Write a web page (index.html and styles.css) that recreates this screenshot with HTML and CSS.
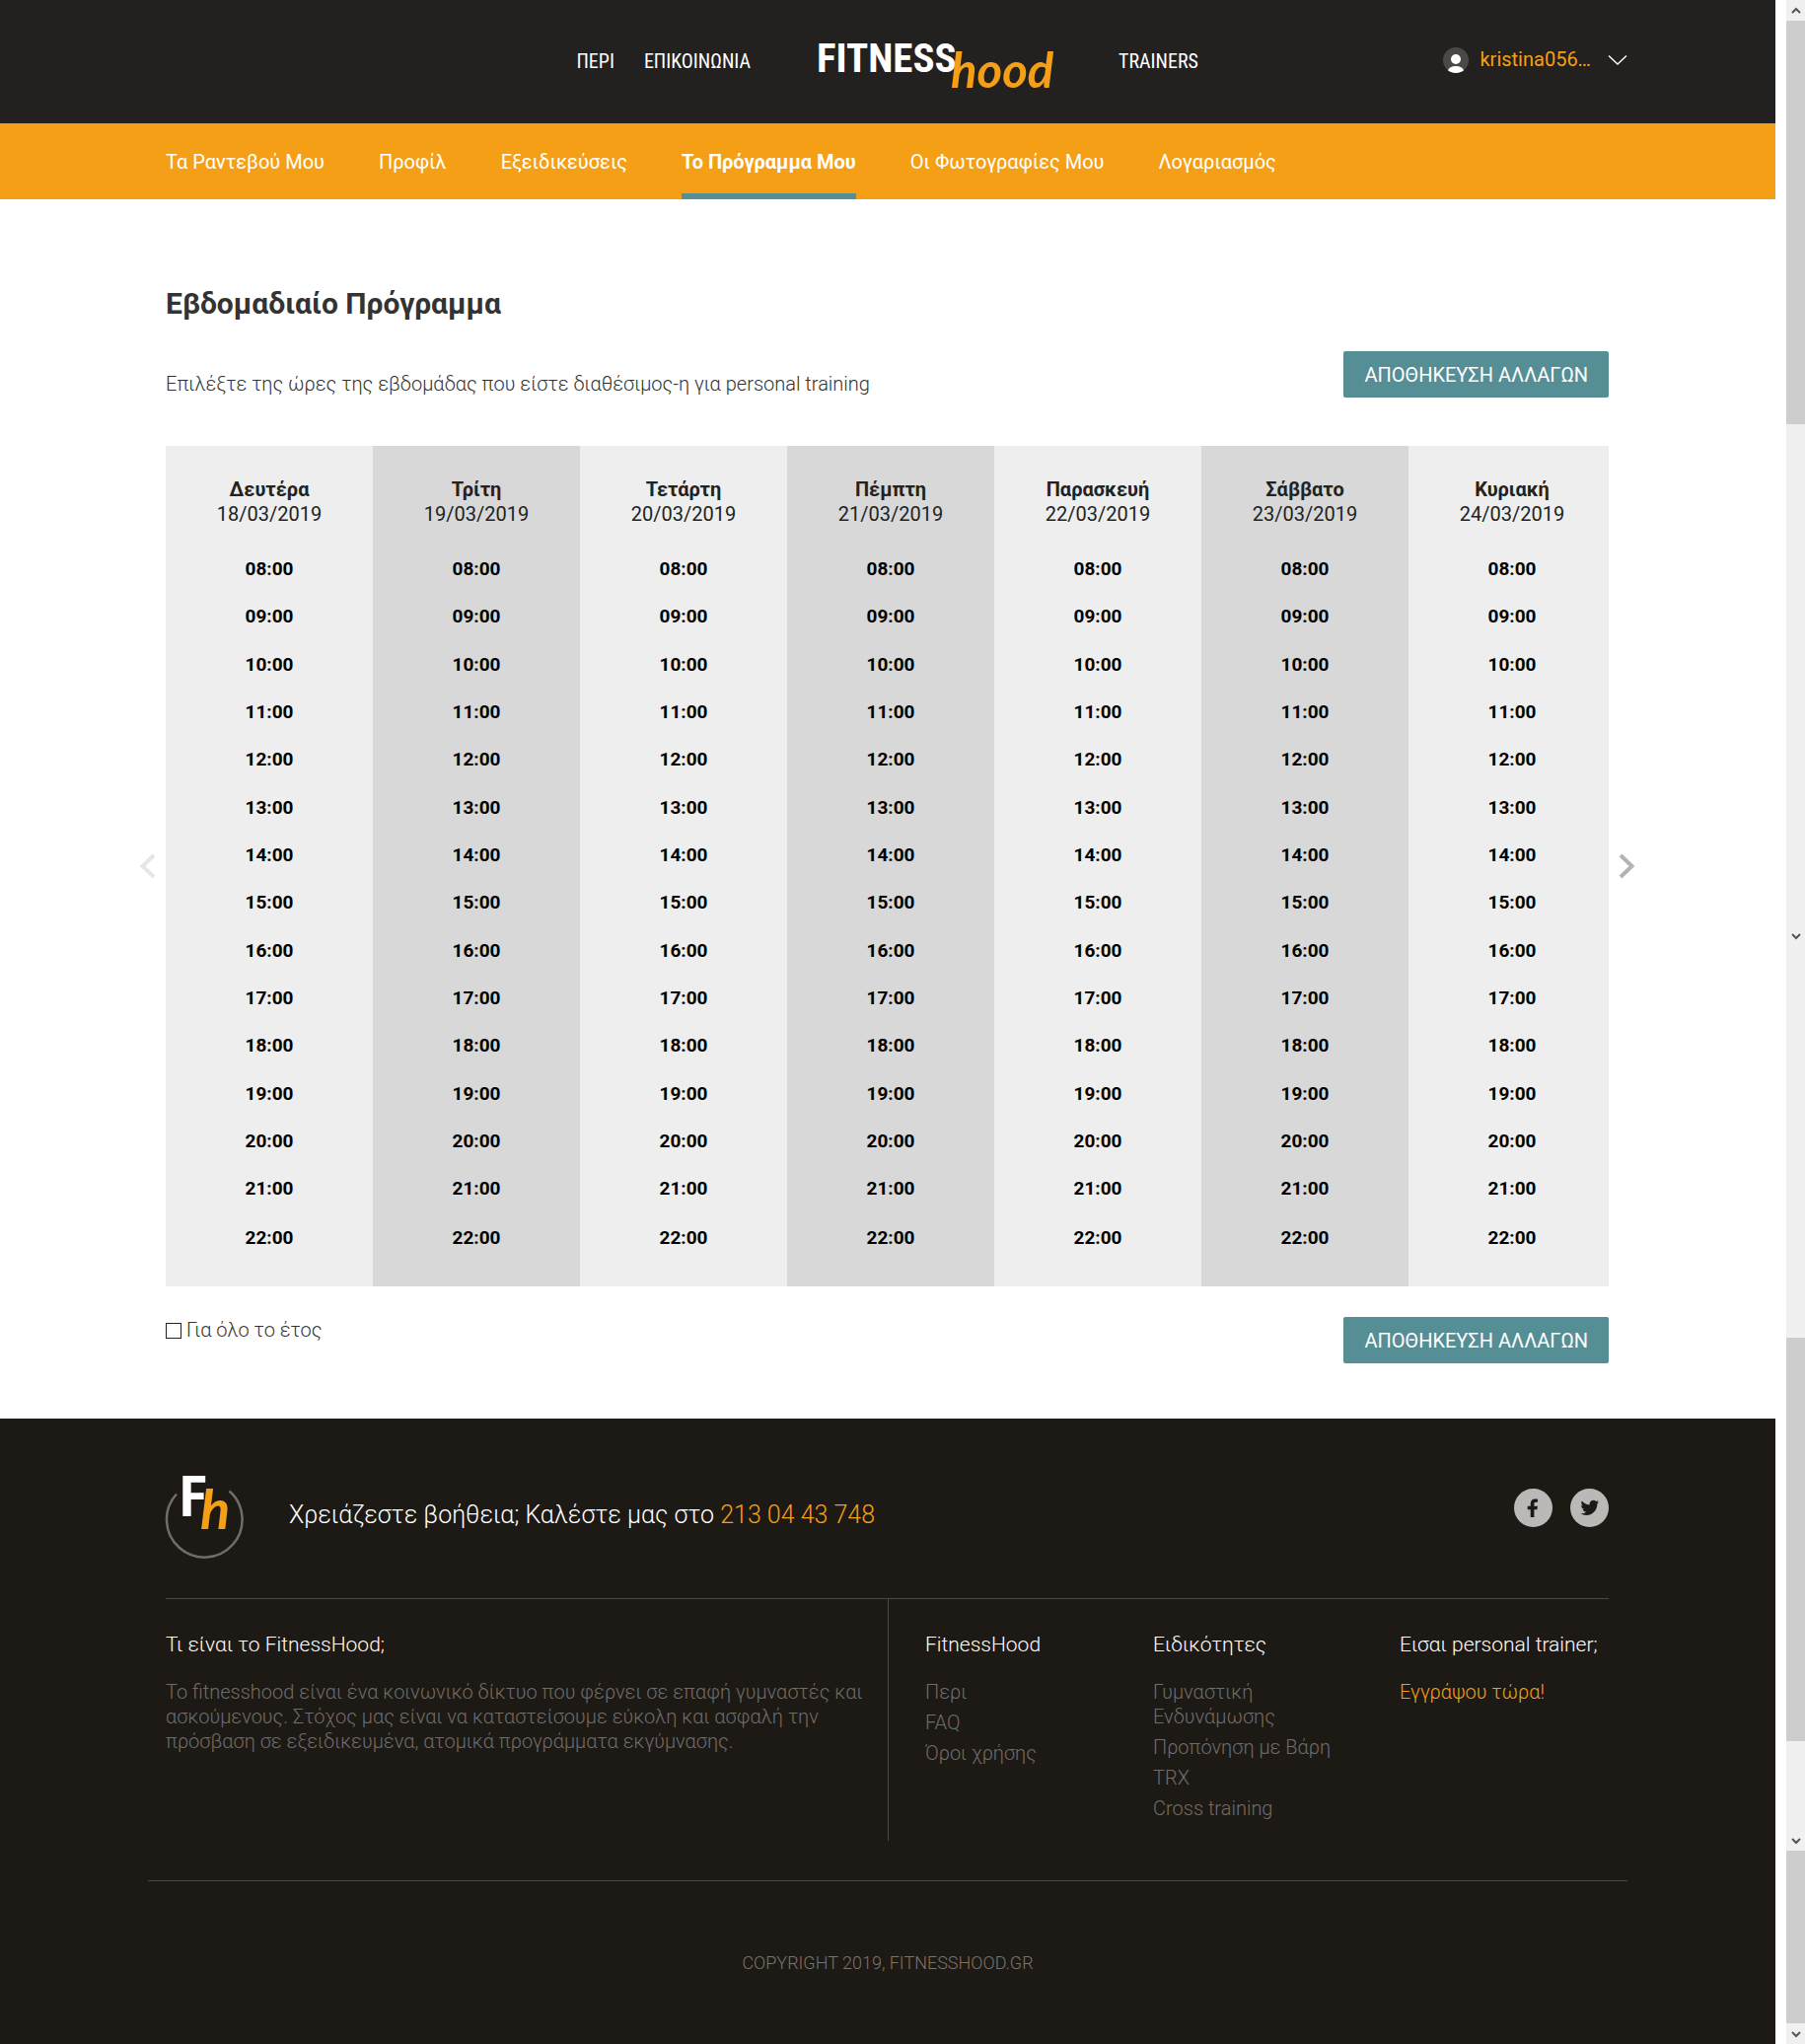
FILE: index.html
```html
<!DOCTYPE html>
<html lang="el">
<head>
<meta charset="utf-8">
<title>FitnessHood – Το Πρόγραμμα Μου</title>
<link rel="stylesheet" href="styles.css">
</head>
<body>
<div class="page">
  <header class="site-header">
    <div class="header-row">
      <nav class="main-nav main-nav-left" aria-label="Κύριο μενού">
        <a href="#about">ΠΕΡΙ</a>
        <a href="#contact">ΕΠΙΚΟΙΝΩΝΙΑ</a>
      </nav>
      <a class="logo" href="#home" aria-label="FitnessHood">
        <svg width="239" height="66" viewBox="0 0 239 66">
          <text class="logo-fitness" x="0" y="43">FITNESS</text>
          <text class="logo-hood" x="136" y="59">hood</text>
        </svg>
      </a>
      <nav class="main-nav main-nav-right" aria-label="Trainers">
        <a href="#trainers">TRAINERS</a>
      </nav>
      <button class="user-menu" type="button">
        <svg width="26" height="26" viewBox="0 0 26 26"><defs><clipPath id="disc"><circle cx="13" cy="13" r="13"/></clipPath></defs><circle cx="13" cy="13" r="13" fill="#4a4947"/><g clip-path="url(#disc)" fill="#fff"><circle cx="13" cy="12" r="5"/><ellipse cx="13" cy="24" rx="8" ry="5"/></g></svg>
        <span>kristina056…</span>
        <svg width="20" height="12" viewBox="0 0 20 12"><path d="M1 1.5 10 10 19 1.5" fill="none" stroke="#fff" stroke-width="1.4"/></svg>
      </button>
    </div>
  </header>

  <nav class="sub-nav" aria-label="Λογαριασμός">
    <div class="sub-nav-row">
      <a href="#appointments">Τα Ραντεβού Μου</a>
      <a href="#profile">Προφίλ</a>
      <a href="#skills">Εξειδικεύσεις</a>
      <a class="active" href="#schedule" aria-current="page">Το Πρόγραμμα Μου</a>
      <a href="#photos">Οι Φωτογραφίες Μου</a>
      <a href="#account">Λογαριασμός</a>
    </div>
  </nav>

  <main class="content">
    <h1>Εβδομαδιαίο Πρόγραμμα</h1>
    <div class="intro">
      <p>Επιλέξτε της ώρες της εβδομάδας που είστε διαθέσιμος-η για personal training</p>
      <button class="save" type="button">ΑΠΟΘΗΚΕΥΣΗ ΑΛΛΑΓΩΝ</button>
    </div>
    <div class="schedule">
      <button class="arrow arrow-prev" type="button" aria-label="Προηγούμενη εβδομάδα" disabled><svg width="17" height="26" viewBox="0 0 17 26"><path d="M15 2 3.500 13 15 24" fill="none" stroke="currentColor" stroke-width="4"/></svg></button>
      <div class="table-clip">
        <table>
          <colgroup><col><col class="alt"><col><col class="alt"><col><col class="alt"><col></colgroup>
          <thead><tr>
            <th scope="col">Δευτέρα <span>18/03/2019</span></th>
            <th scope="col">Τρίτη <span>19/03/2019</span></th>
            <th scope="col">Τετάρτη <span>20/03/2019</span></th>
            <th scope="col">Πέμπτη <span>21/03/2019</span></th>
            <th scope="col">Παρασκευή <span>22/03/2019</span></th>
            <th scope="col">Σάββατο <span>23/03/2019</span></th>
            <th scope="col">Κυριακή <span>24/03/2019</span></th>
          </tr></thead>
          <tbody>
            <tr><td>08:00</td><td>08:00</td><td>08:00</td><td>08:00</td><td>08:00</td><td>08:00</td><td>08:00</td></tr>
            <tr><td>09:00</td><td>09:00</td><td>09:00</td><td>09:00</td><td>09:00</td><td>09:00</td><td>09:00</td></tr>
            <tr><td>10:00</td><td>10:00</td><td>10:00</td><td>10:00</td><td>10:00</td><td>10:00</td><td>10:00</td></tr>
            <tr><td>11:00</td><td>11:00</td><td>11:00</td><td>11:00</td><td>11:00</td><td>11:00</td><td>11:00</td></tr>
            <tr><td>12:00</td><td>12:00</td><td>12:00</td><td>12:00</td><td>12:00</td><td>12:00</td><td>12:00</td></tr>
            <tr><td>13:00</td><td>13:00</td><td>13:00</td><td>13:00</td><td>13:00</td><td>13:00</td><td>13:00</td></tr>
            <tr><td>14:00</td><td>14:00</td><td>14:00</td><td>14:00</td><td>14:00</td><td>14:00</td><td>14:00</td></tr>
            <tr><td>15:00</td><td>15:00</td><td>15:00</td><td>15:00</td><td>15:00</td><td>15:00</td><td>15:00</td></tr>
            <tr><td>16:00</td><td>16:00</td><td>16:00</td><td>16:00</td><td>16:00</td><td>16:00</td><td>16:00</td></tr>
            <tr><td>17:00</td><td>17:00</td><td>17:00</td><td>17:00</td><td>17:00</td><td>17:00</td><td>17:00</td></tr>
            <tr><td>18:00</td><td>18:00</td><td>18:00</td><td>18:00</td><td>18:00</td><td>18:00</td><td>18:00</td></tr>
            <tr><td>19:00</td><td>19:00</td><td>19:00</td><td>19:00</td><td>19:00</td><td>19:00</td><td>19:00</td></tr>
            <tr><td>20:00</td><td>20:00</td><td>20:00</td><td>20:00</td><td>20:00</td><td>20:00</td><td>20:00</td></tr>
            <tr><td>21:00</td><td>21:00</td><td>21:00</td><td>21:00</td><td>21:00</td><td>21:00</td><td>21:00</td></tr>
            <tr><td>22:00</td><td>22:00</td><td>22:00</td><td>22:00</td><td>22:00</td><td>22:00</td><td>22:00</td></tr>
          </tbody>
        </table>
      </div>
      <button class="arrow arrow-next" type="button" aria-label="Επόμενη εβδομάδα"><svg width="17" height="26" viewBox="0 0 17 26"><path d="M2 2 13.500 13 2 24" fill="none" stroke="currentColor" stroke-width="4"/></svg></button>
    </div>
    <div class="after">
      <label class="year"><input type="checkbox"> Για όλο το έτος</label>
      <button class="save" type="button">ΑΠΟΘΗΚΕΥΣΗ ΑΛΛΑΓΩΝ</button>
    </div>
  </main>

  <footer class="site-footer">
    <div class="footer-inner">
      <div class="help">
        <svg width="80" height="87" viewBox="0 0 80 87">
          <path d="M11 20.500A38.300 38.300 0 1 0 64.500 17.500" fill="none" stroke="#6f6e6c" stroke-width="2.500"/>
          <text class="mark-f" x="14" y="43">F</text>
          <text class="mark-h" x="35" y="56">h</text>
        </svg>
        <p>Χρειάζεστε βοήθεια; Καλέστε μας στο <a href="tel:2130443748">213 04 43 748</a></p>
        <div class="social">
          <a href="#facebook" aria-label="Facebook"><svg width="39" height="39" viewBox="0 0 39 39"><circle cx="19.500" cy="19.500" r="19.500" fill="#bbb9b7"/><path d="M24 10.500v3.300h-1.900c-1.400 0-1.700.7-1.700 1.700v2.200h3.500l-.5 3.500h-3V29h-3.700v-7.800h-3v-3.500h3v-2.600c0-3 1.900-4.700 4.600-4.700 1.200 0 2.400.1 2.700.1z" fill="#1d1915"/></svg></a>
          <a href="#twitter" aria-label="Twitter"><svg width="39" height="39" viewBox="0 0 39 39"><circle cx="19.500" cy="19.500" r="19.500" fill="#bbb9b7"/><path transform="translate(10.500 10) scale(.78)" d="M23.950 4.570a10 10 0 0 1-2.820.77 4.960 4.960 0 0 0 2.160-2.720c-.95.550-2 .950-3.120 1.180a4.920 4.920 0 0 0-8.390 4.480C7.690 8.090 4.070 6.130 1.640 3.160a4.900 4.900 0 0 0-.67 2.480c0 1.710.87 3.210 2.190 4.090a4.900 4.900 0 0 1-2.230-.61v.06a4.920 4.920 0 0 0 3.950 4.830 5 5 0 0 1-2.210.08 4.940 4.940 0 0 0 4.600 3.420A9.870 9.870 0 0 1 0 19.540a13.990 13.990 0 0 0 7.550 2.210c9.050 0 14-7.500 14-13.980 0-.21 0-.42-.02-.63a9.940 9.940 0 0 0 2.460-2.550z" fill="#1d1915"/></svg></a>
        </div>
      </div>
      <div class="columns">
        <section class="about">
          <h2>Τι είναι το FitnessHood;</h2>
          <p>Το fitnesshood είναι ένα κοινωνικό δίκτυο που φέρνει σε επαφή γυμναστές και ασκούμενους. Στόχος μας είναι να καταστείσουμε εύκολη και ασφαλή την πρόσβαση σε εξειδικευμένα, ατομικά προγράμματα εκγύμνασης.</p>
        </section>
        <section class="links">
          <h2>FitnessHood</h2>
          <ul>
            <li><a href="#about">Περι</a></li>
            <li><a href="#faq">FAQ</a></li>
            <li><a href="#terms">Όροι χρήσης</a></li>
          </ul>
        </section>
        <section class="specialties">
          <h2>Ειδικότητες</h2>
          <ul>
            <li><a href="#strength">Γυμναστική Ενδυνάμωσης</a></li>
            <li><a href="#weights">Προπόνηση με Βάρη</a></li>
            <li><a href="#trx">TRX</a></li>
            <li><a href="#cross">Cross training</a></li>
          </ul>
        </section>
        <section class="join">
          <h2>Εισαι personal trainer;</h2>
          <a href="#signup">Εγγράψου τώρα!</a>
        </section>
      </div>
    </div>
    <p class="copyright">COPYRIGHT 2019, FITNESSHOOD.GR</p>
  </footer>
</div>

<div class="scrollbar" aria-hidden="true">
  <span class="step"><svg width="10" height="8" viewBox="0 0 10 8"><path d="M1 6 5 2 9 6" fill="none" stroke="#555" stroke-width="2"/></svg></span>
  <span class="thumb long"></span>
  <span class="track upper"></span>
  <span class="step"><svg width="10" height="8" viewBox="0 0 10 8"><path d="M1 2 5 6 9 2" fill="none" stroke="#555" stroke-width="2"/></svg></span>
  <span class="track middle"></span>
  <span class="thumb long"></span>
  <span class="track lower"></span>
  <span class="step"><svg width="10" height="8" viewBox="0 0 10 8"><path d="M1 2 5 6 9 2" fill="none" stroke="#555" stroke-width="2"/></svg></span>
  <span class="thumb short"></span>
  <span class="step"><svg width="10" height="8" viewBox="0 0 10 8"><path d="M1 2 5 6 9 2" fill="none" stroke="#555" stroke-width="2"/></svg></span>
</div>
</body>
</html>
```

FILE: styles.css
```css
* { box-sizing: border-box; }

body {
  margin: 0;
  display: flex;
  gap: 11px;
  background: #fff;
  color: #333;
  font: 400 20px/25px Roboto, sans-serif;
}

a { color: inherit; text-decoration: none; }
h1, h2, p, ul { margin: 0; padding: 0; }
ul { list-style: none; }
svg { display: block; overflow: visible; }

button {
  border: 0;
  padding: 0;
  background: none;
  color: inherit;
  font: inherit;
  cursor: pointer;
}

.page { flex: 1; min-width: 0; }

/* Header */
.site-header { background: #22211f; color: #fff; }

.header-row {
  max-width: 1500px;
  margin: 0 auto;
  height: 125px;
  display: grid;
  grid-template-columns: 611px 239px 1fr auto;
  column-gap: 67px;
  align-items: center;
}

.main-nav {
  display: flex;
  gap: 30px;
  font-family: "Roboto Condensed", Roboto, sans-serif;
}

.main-nav-left { justify-content: flex-end; }
.logo-fitness { font: 700 41px "Roboto Condensed", "Liberation Sans Narrow", sans-serif; fill: #fff; }
.logo-hood { font: italic 700 49px Lato, sans-serif; fill: #f59f17; }

.user-menu {
  display: flex;
  align-items: center;
  gap: 11px;
  padding-bottom: 4px;
  color: #f59f17;
}

.user-menu span { margin-right: 6px; }

/* Account menu */
.sub-nav { background: #f59f17; color: #fff; }

.sub-nav-row {
  max-width: 1500px;
  margin: 0 auto;
  padding: 0 18px;
  display: flex;
  gap: 55px;
}

.sub-nav a { padding: 27px 0 19px; border-bottom: 6px solid transparent; }
.sub-nav .active { border-color: #558e95; font-weight: 700; }

/* Weekly schedule */
.content {
  max-width: 1500px;
  margin: 0 auto;
  padding: 87px 19px 56px 18px;
}

h1 { font-size: 30px; line-height: 38px; font-weight: 700; }

.intro {
  display: flex;
  justify-content: space-between;
  align-items: flex-end;
  margin: 29px 0 49px;
}

.intro p { font-weight: 300; padding-bottom: 1px; }

.save {
  padding: 12px 21px 10px;
  border-radius: 2px;
  background: #558e95;
  color: #fff;
}

.schedule { position: relative; }
.table-clip { overflow: hidden; }

table {
  width: calc(100% + 7px);
  table-layout: fixed;
  border-collapse: collapse;
  text-align: center;
}

col { background: #eee; }
col.alt { background: #d8d8d8; }
th { height: 100px; padding: 32px 0 18px; color: #222; font-weight: 700; }
th span { display: block; font-weight: 400; }
td { height: 48px; padding: 0; color: #000; font-size: 19px; font-weight: 700; }
tr:nth-child(3n + 2) td { height: 49px; }
tr:last-child td { height: 75px; padding-bottom: 25px; }

.arrow { position: absolute; top: 50%; transform: translateY(-50%); color: #b3b3b3; }
.arrow-prev { right: calc(100% + 10px); color: #e6e6e6; }
.arrow-next { left: calc(100% + 10px); }

.after { display: flex; justify-content: space-between; margin-top: 31px; }
.year { display: flex; align-items: center; gap: 5px; height: 27px; font-weight: 300; }

.year input {
  appearance: none;
  width: 16px;
  height: 16px;
  margin: 0;
  border: 1px solid #222;
}

/* Footer */
.site-footer { background: #1d1915; color: #fff; font-weight: 300; }
.footer-inner { max-width: 1500px; margin: 0 auto; padding: 56px 19px 40px 18px; border-bottom: 1px solid #4a4744; }

.help {
  display: flex;
  align-items: center;
  padding-bottom: 39px;
  border-bottom: 1px solid #4a4744;
}

.mark-f { font: 700 58px "Roboto Condensed", "Liberation Sans Narrow", sans-serif; fill: #fff; }
.mark-h { font: italic 700 56px Lato, sans-serif; fill: #f59f17; }
.help p { margin-left: 45px; font-size: 25px; line-height: 30px; padding-bottom: 4px; }
.help p a, .join a { color: #f59f17; }
.social { display: flex; gap: 18px; margin-left: auto; padding-bottom: 18px; }

.columns {
  display: grid;
  grid-template-columns: 733px 268px 250px 1fr;
  min-height: 245px;
}

.columns section { padding-top: 34px; }
.about { border-right: 1px solid #4a4744; }
.about p { padding-right: 20px; }
h2 { margin-bottom: 23px; font-size: 21px; line-height: 25px; font-weight: 300; }
.about p, .columns ul { color: #6f6d6a; }
.links { padding-left: 37px; }
.specialties { padding-right: 50px; }
li { margin-bottom: 6px; }

.copyright {
  padding: 70px 0;
  color: #777572;
  font: 300 18px/25px Roboto, sans-serif;
  text-align: center;
}

/* Scroll rail */
.scrollbar { width: 19px; display: flex; flex-direction: column; background: #f0f0f0; }
.step { height: 21px; display: grid; place-items: center; }
.thumb { background: #cdcdcd; }
.long { flex: 409; }
.upper { flex: 508; }
.middle { flex: 397; }
.lower { flex: 90; }
.short { flex: 175; }
```
